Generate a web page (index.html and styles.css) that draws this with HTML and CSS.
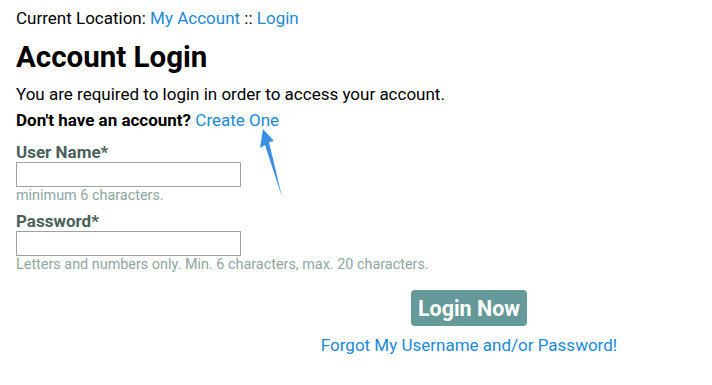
FILE: index.html
```html
<!DOCTYPE html>
<html lang="en">
<head>
    <meta charset="UTF-8">
    <title>Account Login</title>
    <link rel="stylesheet" href="styles.css">
</head>
<body>
    <div class="page">
        <div class="breadcrumb">Current Location: <a href="#">My Account</a> :: <a href="#">Login</a></div>
        <h1>Account Login</h1>
        <p class="intro">You are required to login in order to access your account.</p>
        <p class="signup"><strong>Don't have an account?</strong> <a href="#">Create One</a></p>

        <form>
            <label for="username">User Name*</label>
            <input type="text" id="username">
            <div class="hint">minimum 6 characters.</div>

            <label for="password">Password*</label>
            <input type="password" id="password">
            <div class="hint">Letters and numbers only. Min. 6 characters, max. 20 characters.</div>

            <div class="actions">
                <button type="submit">Login Now</button>
                <a href="#" class="forgot">Forgot My Username and/or Password!</a>
            </div>
        </form>

        <!-- annotation arrow -->
        <svg class="arrow" width="40" height="80" viewBox="250 120 40 80">
            <polygon points="263,129 274,141 269,142 282,197 265,145 260,148" fill="#3b8fe3"/>
        </svg>
    </div>
</body>
</html>
```

FILE: styles.css
```css
body {
    margin: 0;
    font-family: Roboto, "Liberation Sans", sans-serif;
    font-size: 17px;
    color: #000;
    background: #fff;
}
a {
    color: #2289d8;
    text-decoration: none;
}
.page {
    position: relative;
    padding: 8px 16px;
}
.breadcrumb {
    line-height: 20px;
}
h1 {
    font-size: 29.5px;
    font-weight: bold;
    margin: 11px 0 9px;
    line-height: 36px;
}
.intro {
    margin: 0;
    line-height: 20px;
}
.signup {
    margin: 6px 0 0;
    line-height: 20px;
}
label {
    display: block;
    font-weight: bold;
    color: #4a605c;
    margin-top: 12px;
    line-height: 20px;
}
input {
    display: block;
    width: 225px;
    height: 25px;
    box-sizing: border-box;
    border: 1px solid #a0a0a0;
    margin: 0;
    padding: 2px 4px;
}
.hint {
    font-size: 14.4px;
    color: #8ea6a2;
    line-height: 18px;
}
.hint + label {
    margin-top: 6px;
}
.actions {
    display: flex;
    flex-direction: column;
    align-items: center;
    margin-left: 253px;
    width: 400px;
    margin-top: 16px;
}
button {
    background: #669999;
    color: #fff;
    border: none;
    border-radius: 4px;
    font-family: Roboto, "Liberation Sans", sans-serif;
    font-size: 21.5px;
    font-weight: bold;
    padding: 0 7px;
    height: 36px;
    cursor: pointer;
}
.forgot {
    margin-top: 9px;
    line-height: 20px;
}
.arrow {
    position: absolute;
    left: 250px;
    top: 120px;
}
```
